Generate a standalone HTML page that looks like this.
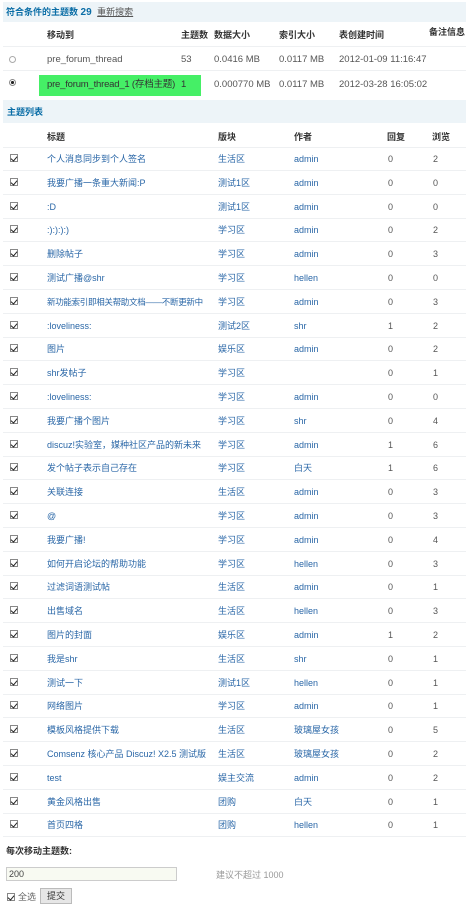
<!DOCTYPE html>
<html><head><meta charset="utf-8"><style>
*{margin:0;padding:0;box-sizing:border-box}
body{width:469px;height:911px;background:#fff;font-family:"Liberation Sans","Noto Sans CJK SC",sans-serif;font-size:9px;color:#444;position:relative;overflow:hidden}
.a{position:absolute;white-space:nowrap;line-height:12px;height:12px}
.bar{position:absolute;left:3px;width:463px;background:#edf4f8;}
.hd{color:#0a6da6;font-weight:bold}
.th{color:#333;font-weight:bold}
.ln{position:absolute;left:3px;width:463px;height:1px;background:#eef0f2}
.lk{color:#2a67a7}
.cb{position:absolute;width:8px;height:8px;border:1px solid #888;background:#fff}
.cb:after{content:"";position:absolute;left:1px;top:0px;width:3px;height:5px;border:solid #222;border-width:0 1px 1px 0;transform:rotate(40deg)}
.m{font-size:9.5px;color:#555}
</style></head><body>
<div class="bar" style="top:2px;height:20px"></div>
<div class="a hd" style="left:6px;top:6px">符合条件的主题数 <span style="font-size:10px">29</span> <span style="color:#555;font-weight:normal;text-decoration:underline;margin-left:3px">重新搜索</span></div>
<div class="a th" style="left:47px;top:29px">移动到</div>
<div class="a th" style="left:181px;top:29px">主题数</div>
<div class="a th" style="left:214px;top:29px">数据大小</div>
<div class="a th" style="left:279px;top:29px">索引大小</div>
<div class="a th" style="left:339px;top:29px">表创建时间</div>
<div class="a th" style="left:429px;top:26px">备注信息</div>
<div class="ln" style="top:46px"></div>
<div class="a" style="left:9px;top:56px;width:7px;height:7px;border:1px solid #aaa;border-radius:50%"></div>
<div class="a m" style="left:47px;top:54px">pre_forum_thread</div>
<div class="a m" style="left:181px;top:54px">53</div>
<div class="a m" style="left:214px;top:54px">0.0416 MB</div>
<div class="a m" style="left:279px;top:54px">0.0117 MB</div>
<div class="a m" style="left:339px;top:54px">2012-01-09 11:16:47</div>
<div class="ln" style="top:70px"></div>
<div class="a" style="left:9px;top:79px;width:7px;height:7px;border:1px solid #888;border-radius:50%;background:radial-gradient(#222 40%,#fff 50%)"></div>
<div class="a" style="left:39px;top:75px;width:162px;height:21px;background:#45ef66"></div>
<div class="a m" style="left:47px;top:79px;color:#333;letter-spacing:-0.2px">pre_forum_thread_1 (存档主题)</div>
<div class="a m" style="left:181px;top:79px;color:#333">1</div>
<div class="a m" style="left:214px;top:79px">0.000770 MB</div>
<div class="a m" style="left:279px;top:79px">0.0117 MB</div>
<div class="a m" style="left:339px;top:79px">2012-03-28 16:05:02</div>
<div class="bar" style="top:100px;height:23px"></div>
<div class="a hd" style="left:7px;top:106px">主题列表</div>
<div class="a th" style="left:47px;top:131px">标题</div>
<div class="a th" style="left:218px;top:131px">版块</div>
<div class="a th" style="left:294px;top:131px">作者</div>
<div class="a th" style="left:387px;top:131px">回复</div>
<div class="a th" style="left:432px;top:131px">浏览</div>
<div class="ln" style="top:147px"></div>
<div id="rows"></div>
<div class="a th" style="left:6px;top:845px">每次移动主题数:</div>
<div class="a" style="left:6px;top:867px;width:171px;height:14px;border:1px solid #ccc;background:#f8faf2;font-size:9px;padding:0 2px">200</div>
<div class="a" style="left:216px;top:869px;color:#999">建议不超过 1000</div>
<div class="cb" style="left:7px;top:893px"></div>
<div class="a" style="left:18px;top:891px;color:#666">全选</div>
<div class="a" style="left:40px;top:888px;width:32px;height:16px;border:1px solid #bbb;background:#e6e6e6;text-align:center;line-height:14px;color:#333">提交</div>
<script>
var d=[["个人消息同步到个人签名","生活区","admin",0,2],["我要广播一条重大新闻:P","测试1区","admin",0,0],[":D","测试1区","admin",0,0],[":):):):)","学习区","admin",0,2],["删除帖子","学习区","admin",0,3],["测试广播@shr","学习区","hellen",0,0],["新功能索引即相关帮助文档——不断更新中","学习区","admin",0,3],[":loveliness:","测试2区","shr",1,2],["图片","娱乐区","admin",0,2],["shr发帖子","学习区","",0,1],[":loveliness:","学习区","admin",0,0],["我要广播个图片","学习区","shr",0,4],["discuz!实验室，媒种社区产品的新未来","学习区","admin",1,6],["发个帖子表示自己存在","学习区","白天",1,6],["关联连接","生活区","admin",0,3],["@","学习区","admin",0,3],["我要广播!","学习区","admin",0,4],["如何开启论坛的帮助功能","学习区","hellen",0,3],["过滤词语测试帖","生活区","admin",0,1],["出售域名","生活区","hellen",0,3],["图片的封面","娱乐区","admin",1,2],["我是shr","生活区","shr",0,1],["测试一下","测试1区","hellen",0,1],["网络图片","学习区","admin",0,1],["模板风格提供下载","生活区","玻璃屋女孩",0,5],["Comsenz 核心产品 Discuz! X2.5 测试版","生活区","玻璃屋女孩",0,2],["test","娱主交流","admin",0,2],["黄金风格出售","团购","白天",0,1],["首页四格","团购","hellen",0,1]];
var h="";
for(var i=0;i<d.length;i++){var y=153+i*23.8;var r=d[i];
var ex=(i==6)?';font-size:8.5px;letter-spacing:-0.3px':'';
h+='<div class="cb" style="left:10px;top:'+(y+1)+'px"></div>';
h+='<div class="a lk" style="left:47px;top:'+y+'px;max-width:168px;overflow:hidden'+ex+'">'+r[0]+'</div>';
h+='<div class="a lk" style="left:218px;top:'+y+'px">'+r[1]+'</div>';
h+='<div class="a lk" style="left:294px;top:'+y+'px">'+r[2]+'</div>';
h+='<div class="a" style="left:388px;top:'+y+'px;color:#555">'+r[3]+'</div>';
h+='<div class="a" style="left:433px;top:'+y+'px;color:#555">'+r[4]+'</div>';
h+='<div class="ln" style="top:'+(y+17)+'px"></div>';}
document.getElementById("rows").innerHTML=h;
</script>
</body></html>
